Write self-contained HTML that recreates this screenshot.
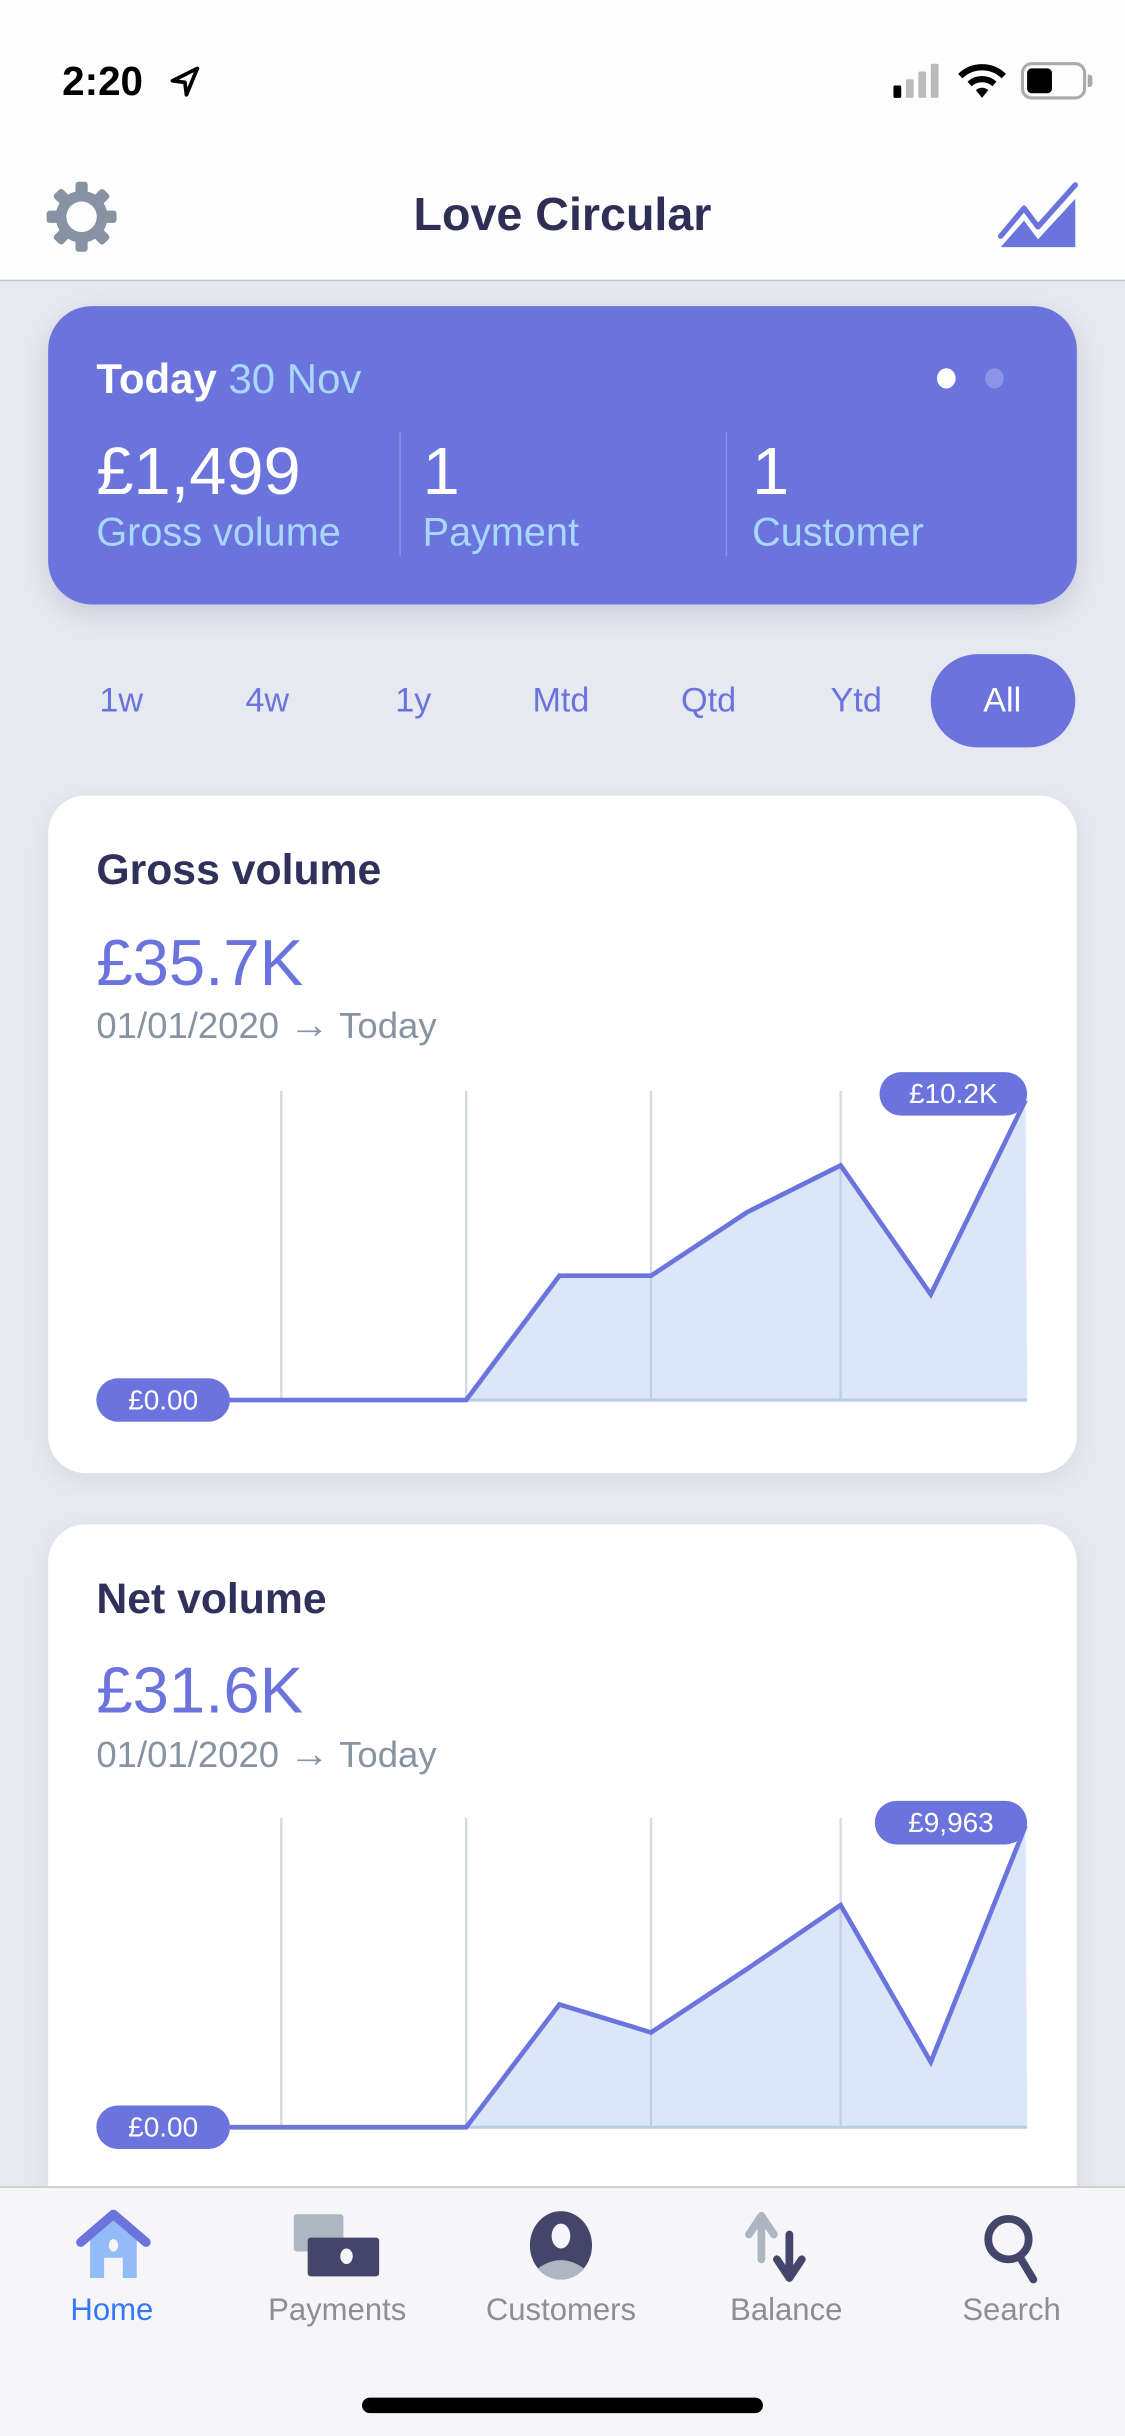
<!DOCTYPE html>
<html><head><meta charset="utf-8"><style>
*{margin:0;padding:0;box-sizing:border-box}
html,body{width:1125px;height:2436px;overflow:hidden;background:#e6e9ef;font-family:"Liberation Sans",sans-serif}
#w{position:absolute;left:0;top:0;width:724px;height:1568px;transform:scale(1.55387);transform-origin:0 0;background:#e6e9ef}
.a{position:absolute;white-space:nowrap}
.card{position:absolute;left:31px;width:662px;background:#fff;border-radius:24px;box-shadow:0 4px 14px rgba(50,50,93,.08)}
.t1{font-size:27.5px;font-weight:600;color:#30315a}
.t2{font-size:42px;color:#6b73dd}
.t3{font-size:23.5px;color:#8792a2}
.pill{position:absolute;background:#6b73dd;color:#fff;font-size:18px;border-radius:14px;text-align:center;line-height:28px;height:28px}
.tab{position:absolute;top:438px;font-size:22px;color:#6b73dd;transform:translateX(-50%)}
.tl{position:absolute;top:1476px;font-size:20px;color:#8e8e93;transform:translateX(-50%)}
</style></head><body><div id="w">
<div class="a" style="left:0;top:0;width:724px;height:181px;background:#fdfdfe;border-bottom:1px solid #c4c6cc"></div>
<div class="a" style="left:40px;top:37px;font-size:26px;font-weight:bold;color:#000">2:20</div>
<svg class="a" style="left:108px;top:42px" width="22" height="22" viewBox="0 0 22 22"><path d="M19 2 L3 10 L11 11 L12 19 Z" fill="none" stroke="#000" stroke-width="2.4" stroke-linejoin="round"/></svg>
<div class="a" style="left:575px;top:55px;width:5px;height:8px;background:#000;border-radius:1px"></div>
<div class="a" style="left:583px;top:51px;width:5px;height:12px;background:#bbb;border-radius:1px"></div>
<div class="a" style="left:591px;top:46px;width:5px;height:17px;background:#bbb;border-radius:1px"></div>
<div class="a" style="left:599px;top:41px;width:5px;height:22px;background:#bbb;border-radius:1px"></div>
<svg class="a" style="left:616px;top:40px" width="32" height="24" viewBox="0 0 32 24"><path d="M2 9 A20 20 0 0 1 30 9" fill="none" stroke="#000" stroke-width="4"/><path d="M8 14 A12 12 0 0 1 24 14" fill="none" stroke="#000" stroke-width="4"/><path d="M12 18 L16 23 L20 18 A6 6 0 0 0 12 18Z" fill="#000"/></svg>
<div class="a" style="left:657px;top:40px;width:42px;height:24px;border:2px solid #aaa;border-radius:7px"></div>
<div class="a" style="left:661px;top:44px;width:16px;height:16px;background:#000;border-radius:3px"></div>
<div class="a" style="left:700px;top:48px;width:3px;height:8px;background:#aaa;border-radius:0 2px 2px 0"></div>
<svg class="a" style="left:29px;top:116px" width="47" height="47" viewBox="0 0 48 48"><g fill="#8792a2"><rect x="20" y="1" width="8" height="46" rx="2"/><rect x="20" y="1" width="8" height="46" rx="2" transform="rotate(45 24 24)"/><rect x="20" y="1" width="8" height="46" rx="2" transform="rotate(90 24 24)"/><rect x="20" y="1" width="8" height="46" rx="2" transform="rotate(135 24 24)"/><circle cx="24" cy="24" r="17"/></g><circle cx="24" cy="24" r="10" fill="#fdfdfe"/></svg>
<div class="a" style="left:0;width:724px;top:122px;text-align:center;font-size:30px;font-weight:600;color:#2f2f56">Love Circular</div>
<svg class="a" style="left:641px;top:116px" width="54" height="46" viewBox="0 0 54 46"><path d="M3 36 L18 18 L27 30 L51 3" fill="none" stroke="#6b73dd" stroke-width="3.5" stroke-linecap="round" stroke-linejoin="round"/><path d="M3 43 L18 26 L27 38 L51 12 L51 43 Z" fill="#6b73dd"/></svg>

<div class="a" style="left:31px;top:197px;width:662px;height:192px;background:#6b73dd;border-radius:28px;box-shadow:0 6px 16px rgba(50,50,93,.15)"></div>
<div class="a" style="left:62px;top:229px;font-size:27px;color:#fff"><b style="font-weight:600">Today</b> <span style="color:#a8d8fc">30 Nov</span></div>
<div class="a" style="left:603px;top:237px;width:12px;height:13px;border-radius:50%;background:#fff"></div>
<div class="a" style="left:634px;top:237px;width:12px;height:13px;border-radius:50%;background:#8d93e6"></div>
<div class="a" style="left:62px;top:280px;font-size:43px;color:#fff">£1,499</div>
<div class="a" style="left:272px;top:280px;font-size:43px;color:#fff">1</div>
<div class="a" style="left:484px;top:280px;font-size:43px;color:#fff">1</div>
<div class="a" style="left:62px;top:329px;font-size:25.5px;color:#a8d8fc">Gross volume</div>
<div class="a" style="left:272px;top:329px;font-size:25.5px;color:#a8d8fc">Payment</div>
<div class="a" style="left:484px;top:329px;font-size:25.5px;color:#a8d8fc">Customer</div>
<div class="a" style="left:257px;top:278px;width:1px;height:80px;background:#8a90e4"></div>
<div class="a" style="left:467px;top:278px;width:1px;height:80px;background:#8a90e4"></div>

<div class="a" style="left:599px;top:421px;width:93px;height:60px;border-radius:30px;background:#6b73dd"></div>
<div class="tab" style="left:78px">1w</div><div class="tab" style="left:172px">4w</div><div class="tab" style="left:266px">1y</div><div class="tab" style="left:361px">Mtd</div><div class="tab" style="left:456px">Qtd</div><div class="tab" style="left:551px">Ytd</div><div class="tab" style="left:645px;color:#fff">All</div>

<div class="card" style="top:512px;height:436px"></div>
<div class="a t1" style="left:62px;top:544px">Gross volume</div>
<div class="a t2" style="left:62px;top:596px">£35.7K</div>
<div class="a t3" style="left:62px;top:644px">01/01/2020 <span style="font-size:26px">→</span> Today</div>
<svg class="a" style="left:0;top:0" width="724" height="1568">
<g stroke="#d3dae5" stroke-width="1.5"><line x1="181" y1="702" x2="181" y2="901"/><line x1="300" y1="702" x2="300" y2="901"/><line x1="419" y1="702" x2="419" y2="901"/><line x1="541" y1="702" x2="541" y2="901"/>
<line x1="181" y1="1170" x2="181" y2="1369"/><line x1="300" y1="1170" x2="300" y2="1369"/><line x1="419" y1="1170" x2="419" y2="1369"/><line x1="541" y1="1170" x2="541" y2="1369"/></g>
<path d="M300 901 L360 821 L419 821 L481 780 L541 750 L599 833 L660 708 L661 901 Z" fill="#dbe6f9"/>
<line x1="300" y1="901" x2="661" y2="901" stroke="#b9cbe5" stroke-width="2"/>
<g stroke="#c0cfe4" stroke-width="1.5"><line x1="419" y1="821" x2="419" y2="901"/><line x1="541" y1="750" x2="541" y2="901"/></g>
<polyline points="148,901 300,901 360,821 419,821 481,780 541,750 599,833 660,708" fill="none" stroke="#6b73dd" stroke-width="3"/>
</svg>
<div class="pill" style="left:566px;top:690px;width:95px">£10.2K</div>
<div class="pill" style="left:62px;top:887px;width:86px">£0.00</div>

<div class="card" style="top:981px;height:460px"></div>
<div class="a t1" style="left:62px;top:1013px">Net volume</div>
<div class="a t2" style="left:62px;top:1064px">£31.6K</div>
<div class="a t3" style="left:62px;top:1113px">01/01/2020 <span style="font-size:26px">→</span> Today</div>
<svg class="a" style="left:0;top:0" width="724" height="1568">
<g stroke="#d3dae5" stroke-width="1.5"><line x1="181" y1="1170" x2="181" y2="1369"/><line x1="300" y1="1170" x2="300" y2="1369"/><line x1="419" y1="1170" x2="419" y2="1369"/><line x1="541" y1="1170" x2="541" y2="1369"/></g>
<path d="M300 1369 L360 1290 L419 1308 L481 1267 L541 1226 L599 1327 L660 1175 L661 1369 Z" fill="#dbe6f9"/>
<line x1="300" y1="1369" x2="661" y2="1369" stroke="#b9cbe5" stroke-width="2"/>
<g stroke="#c0cfe4" stroke-width="1.5"><line x1="419" y1="1308" x2="419" y2="1369"/><line x1="541" y1="1226" x2="541" y2="1369"/></g>
<polyline points="148,1369 300,1369 360,1290 419,1308 481,1267 541,1226 599,1327 660,1175" fill="none" stroke="#6b73dd" stroke-width="3"/>
</svg>
<div class="pill" style="left:563px;top:1159px;width:98px">£9,963</div>
<div class="pill" style="left:62px;top:1355px;width:86px">£0.00</div>

<div class="a" style="left:0;top:1407px;width:724px;height:161px;background:#f6f6f8;border-top:1px solid #c4c6cc"></div>
<svg class="a" style="left:48px;top:1422px" width="50" height="46" viewBox="0 0 50 46"><path d="M10 18 L25 5 L40 18 L40 44 L31 44 L31 31 L19 31 L19 44 L10 44 Z" fill="#93bbf8"/><path d="M4 21 L25 3 L46 21" fill="none" stroke="#6b73dd" stroke-width="6" stroke-linejoin="round" stroke-linecap="round"/><ellipse cx="25" cy="23" rx="3" ry="4" fill="#f6f6f8"/></svg>
<svg class="a" style="left:189px;top:1424px" width="56" height="42" viewBox="0 0 56 42"><rect x="0" y="1" width="32" height="24" rx="2" fill="#aeb6c2"/><rect x="9" y="16" width="46" height="25" rx="2" fill="#43456b"/><ellipse cx="34" cy="28" rx="4" ry="5" fill="#f6f6f8"/></svg>
<svg class="a" style="left:340px;top:1423px" width="42" height="44" viewBox="0 0 42 44"><ellipse cx="21" cy="22" rx="20" ry="22" fill="#43456b"/><ellipse cx="21" cy="16" rx="6" ry="8" fill="#f6f6f8"/><path d="M6 37 Q21 26 36 37 Q30 44 21 44 Q12 44 6 37Z" fill="#aeb6c2"/></svg>
<svg class="a" style="left:478px;top:1423px" width="58" height="46" viewBox="0 0 58 46"><path d="M12 31 L12 3 M4 15 L12 3 L20 15" fill="none" stroke="#aeb6c2" stroke-width="5" stroke-linecap="round" stroke-linejoin="round"/><path d="M30 15 L30 43 M22 31 L30 43 L38 31" fill="none" stroke="#43456b" stroke-width="5" stroke-linecap="round" stroke-linejoin="round"/></svg>
<svg class="a" style="left:632px;top:1424px" width="40" height="46" viewBox="0 0 40 46"><circle cx="17" cy="17" r="13" fill="none" stroke="#43456b" stroke-width="5"/><line x1="24" y1="28" x2="33" y2="43" stroke="#43456b" stroke-width="5" stroke-linecap="round"/></svg>
<div class="tl" style="left:72px;color:#3478f6">Home</div>
<div class="tl" style="left:217px">Payments</div>
<div class="tl" style="left:361px">Customers</div>
<div class="tl" style="left:506px">Balance</div>
<div class="tl" style="left:651px">Search</div>
<div class="a" style="left:233px;top:1543px;width:258px;height:10px;border-radius:5px;background:#000"></div>
</div></body></html>
